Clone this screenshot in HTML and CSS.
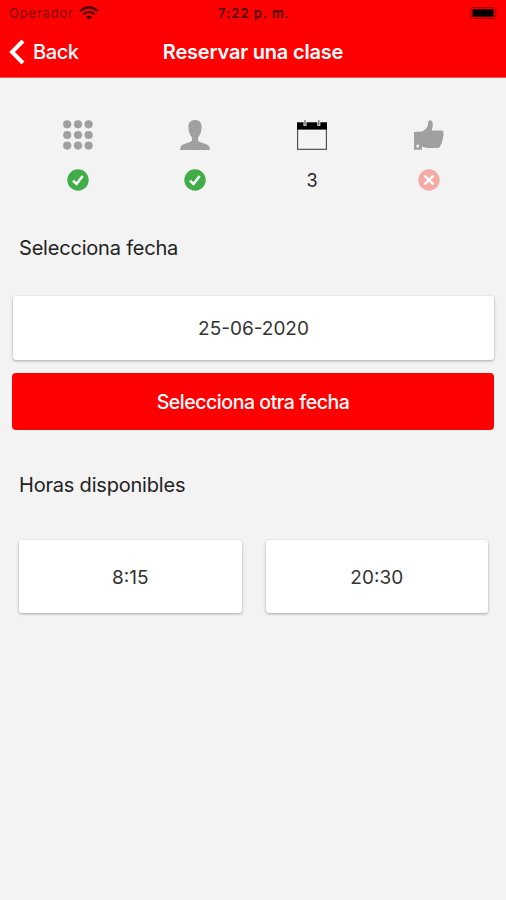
FILE: index.html
```html
<!DOCTYPE html>
<html lang="es">
<head>
<meta charset="utf-8">
<title>Reservar una clase</title>
<link rel="stylesheet" href="styles.css">
</head>
<body>
<header class="header">
  <div class="status">
    <div class="carrier"><span>Operador</span>
      <svg width="20" height="14" viewBox="0 0 20 14" fill="none" stroke="#4a0000" stroke-width="2.3"><path d="M1.2 5.2Q10 -2.6 18.8 5.2"/><path d="M4.3 8.4Q10 3.4 15.7 8.4"/><path d="M7 10.9Q10 8.4 13 10.9L10 13.8Z" fill="#4a0000" stroke="none"/></svg>
    </div>
    <span class="clock">7:22 p. m.</span>
    <svg class="battery" width="29" height="12" viewBox="0 0 29 12"><rect x=".7" y=".7" width="24.6" height="10.6" rx="2.2" fill="none" stroke="#b00000" stroke-width="1.2"/><rect x="2.5" y="2.3" width="21" height="7.4" rx=".6"/><path d="M26.5 4v4q2-2 0-4" fill="#a00000"/></svg>
  </div>
  <nav class="nav">
    <a class="back"><svg width="16" height="26" viewBox="0 0 16 26" fill="none" stroke="#fff" stroke-width="4"><path d="M14 2L3 13L14 24"/></svg><span>Back</span></a>
    <h1 class="title">Reservar una clase</h1>
  </nav>
</header>
<main>
  <ol class="steps">
    <li>
      <svg width="30" height="30" viewBox="0 0 30 30" fill="#a0a0a0"><circle cx="4.2" cy="4.3" r="4.1"/><circle cx="15" cy="4.3" r="4.1"/><circle cx="25.6" cy="4.3" r="4.1"/><circle cx="4.2" cy="15" r="4.1"/><circle cx="15" cy="15" r="4.1"/><circle cx="25.6" cy="15" r="4.1"/><circle cx="4.2" cy="25.6" r="4.1"/><circle cx="15" cy="25.6" r="4.1"/><circle cx="25.6" cy="25.6" r="4.1"/></svg>
      <svg class="badge" width="22" height="22" viewBox="0 0 22 22"><circle cx="11" cy="11" r="10.7" fill="#41ad49"/><path d="M6 11.6L9.5 15L15.7 7" fill="none" stroke="#fff" stroke-width="2.5"/></svg>
    </li>
    <li>
      <svg width="30" height="30" viewBox="0 0 30 30" fill="#a0a0a0"><path d="M15 0C10.5 0 8.2 3 8.4 7C8.5 11.5 9.8 15 12 17.5V20.5C10.8 22.8 4 23.4 1.6 25.6Q.1 27 .1 30H29.9Q29.9 27 28.4 25.6C26 23.4 19.2 22.8 18 20.5V17.5C20.2 15 21.5 11.5 21.6 7C21.8 3 19.5 0 15 0Z"/></svg>
      <svg class="badge" width="22" height="22" viewBox="0 0 22 22"><circle cx="11" cy="11" r="10.7" fill="#41ad49"/><path d="M6 11.6L9.5 15L15.7 7" fill="none" stroke="#fff" stroke-width="2.5"/></svg>
    </li>
    <li>
      <svg width="30" height="30" viewBox="0 0 30 30"><rect x=".6" y="3" width="28.8" height="26.3" fill="#f4f4f4" stroke="#444" stroke-width="1.1"/><path d="M0 2.5H30V9.6H0Z"/><path d="M8 0V6M21.8 0V6" stroke="#f3f3f3" stroke-width="3"/><path d="M8 .3V5.6M21.8 .3V5.6" stroke="#555" stroke-width="1.2"/></svg>
      <span class="badge">3</span>
    </li>
    <li>
      <svg width="30" height="30" viewBox="0 0 30 30" fill="#a0a0a0"><path d="M0 12L7.7 11.5C11 10.3 13.6 7.5 13.8 5L14.5 1.3Q15.6-.5 17.5.8C19.3 2.5 19.1 6.5 17.7 10.6L28 10.5Q29.8 11 29.3 13.2Q30 15.4 28.8 17Q29.3 19.3 28 20.8Q28.5 23.3 26.8 24.5Q26.8 27 24 27.9H14Q10.5 27.8 8 26.4V29.7H0Z"/><circle cx="3.8" cy="26" r="1.5" fill="#f3f3f3"/></svg>
      <svg class="badge" width="22" height="22" viewBox="0 0 22 22"><circle cx="11" cy="11" r="10.7" fill="#f4aaa7"/><path d="M6.6 6.6L15.4 15.4M15.4 6.6L6.6 15.4" fill="none" stroke="#fff" stroke-width="2.3"/></svg>
    </li>
  </ol>
  <h2 class="label label-date">Selecciona fecha</h2>
  <div class="card date">25-06-2020</div>
  <button class="choose">Selecciona otra fecha</button>
  <h2 class="label label-hours">Horas disponibles</h2>
  <div class="hours">
    <div class="card hour">8:15</div>
    <div class="card hour">20:30</div>
  </div>
</main>
</body>
</html>
```
FILE: styles.css
```css
* { box-sizing: border-box; }
body {
  margin: 0;
  min-height: 900px;
  background: #f3f3f3;
  color: #222;
  font-family: Inter, "Liberation Sans", sans-serif;
}
.header {
  height: 78px;
  background: #f00;
  border-bottom: 1px solid #f55;
}
.status {
  display: grid;
  grid-template-columns: 1fr auto 1fr;
  align-items: center;
  height: 26px;
  padding: 0 7px 0 9px;
  color: #4a0000;
  font-size: 13px;
}
.carrier {
  display: flex;
  align-items: center;
  gap: 5px;
  color: #7a0000;
  letter-spacing: .8px;
}
.clock { font-weight: 600; letter-spacing: 1px; }
.battery { justify-self: end; }
.nav {
  display: grid;
  grid-template-columns: 1fr auto 1fr;
  align-items: center;
  height: 52px;
  padding: 0 9px;
  color: #fff;
}
.back {
  display: flex;
  align-items: center;
  gap: 8px;
  font-size: 20px;
  font-weight: 500;
  letter-spacing: -.4px;
}
.title { margin: 0; font-size: 20px; font-weight: 600; letter-spacing: -.2px; }
.steps {
  display: grid;
  grid-template-columns: repeat(4, 1fr);
  margin: 0;
  padding: 42px 18px 0 19px;
  list-style: none;
}
.steps li {
  display: flex;
  flex-direction: column;
  align-items: center;
  gap: 19px;
}
.badge { height: 22px; font-size: 18px; line-height: 24px; }
.label {
  margin: 0 19px;
  font-size: 20px;
  font-weight: 400;
  line-height: 24px;
  letter-spacing: -.2px;
}
.label-date { margin-top: 45px; }
.label-hours { margin-top: 43px; }
.card {
  display: flex;
  align-items: center;
  justify-content: center;
  background: #fff;
  border-radius: 3px;
  box-shadow: 0 1px 3px rgba(0, 0, 0, .32);
  color: #333;
  font-size: 19px;
}
.date { height: 64px; margin: 36px 12px 0 13px; padding-top: 1px; }
.choose {
  display: block;
  width: 482px;
  height: 57px;
  margin: 13px auto 0;
  padding: 0;
  border: 0;
  border-radius: 4px;
  background: #f00;
  color: #fff;
  font: 500 19.5px Inter, sans-serif;
  letter-spacing: -.45px;
}
.hours {
  display: grid;
  grid-template-columns: 1fr 1fr;
  gap: 24px;
  margin: 43px 18px 0 19px;
}
.hour { height: 73px; padding-top: 1px; }
```
